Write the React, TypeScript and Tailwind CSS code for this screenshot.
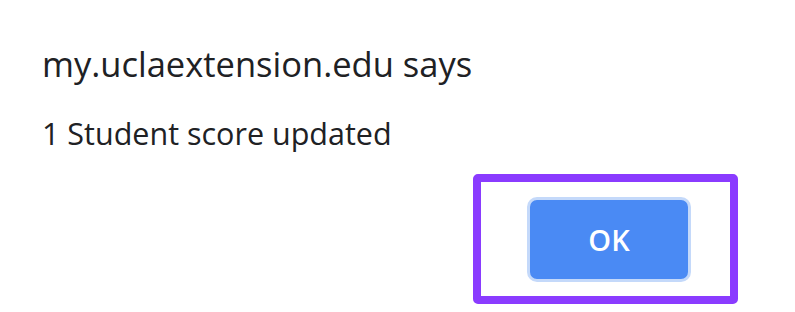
export default function App() {
  return (
    <div className="w-[795px] h-[312px] bg-white flex flex-col font-['Open_Sans',_'Noto_Sans',_sans-serif] text-[#202124]">
      {/* Dialog title */}
      <div className="pl-[42px] pt-[44px] text-[34.5px] leading-[40px]">
        my.uclaextension.edu says
      </div>
      {/* Message */}
      <div className="pl-[42px] pt-[31px] text-[30.5px] leading-[36px]">
        1 Student score updated
      </div>
      {/* Highlighted OK button */}
      <div className="flex justify-end pr-[57px] mt-auto pb-[8px]">
        <div className="w-[265px] h-[130px] border-[8px] border-[#8a3bff] rounded-[5px] flex items-center pl-[46px]">
          <button className="w-[164px] h-[85px] rounded-[10px] border-[3px] border-[#c4d9fa] bg-[#4a8af4] text-white text-[29px] font-semibold leading-none">
            OK
          </button>
        </div>
      </div>
    </div>
  );
}
